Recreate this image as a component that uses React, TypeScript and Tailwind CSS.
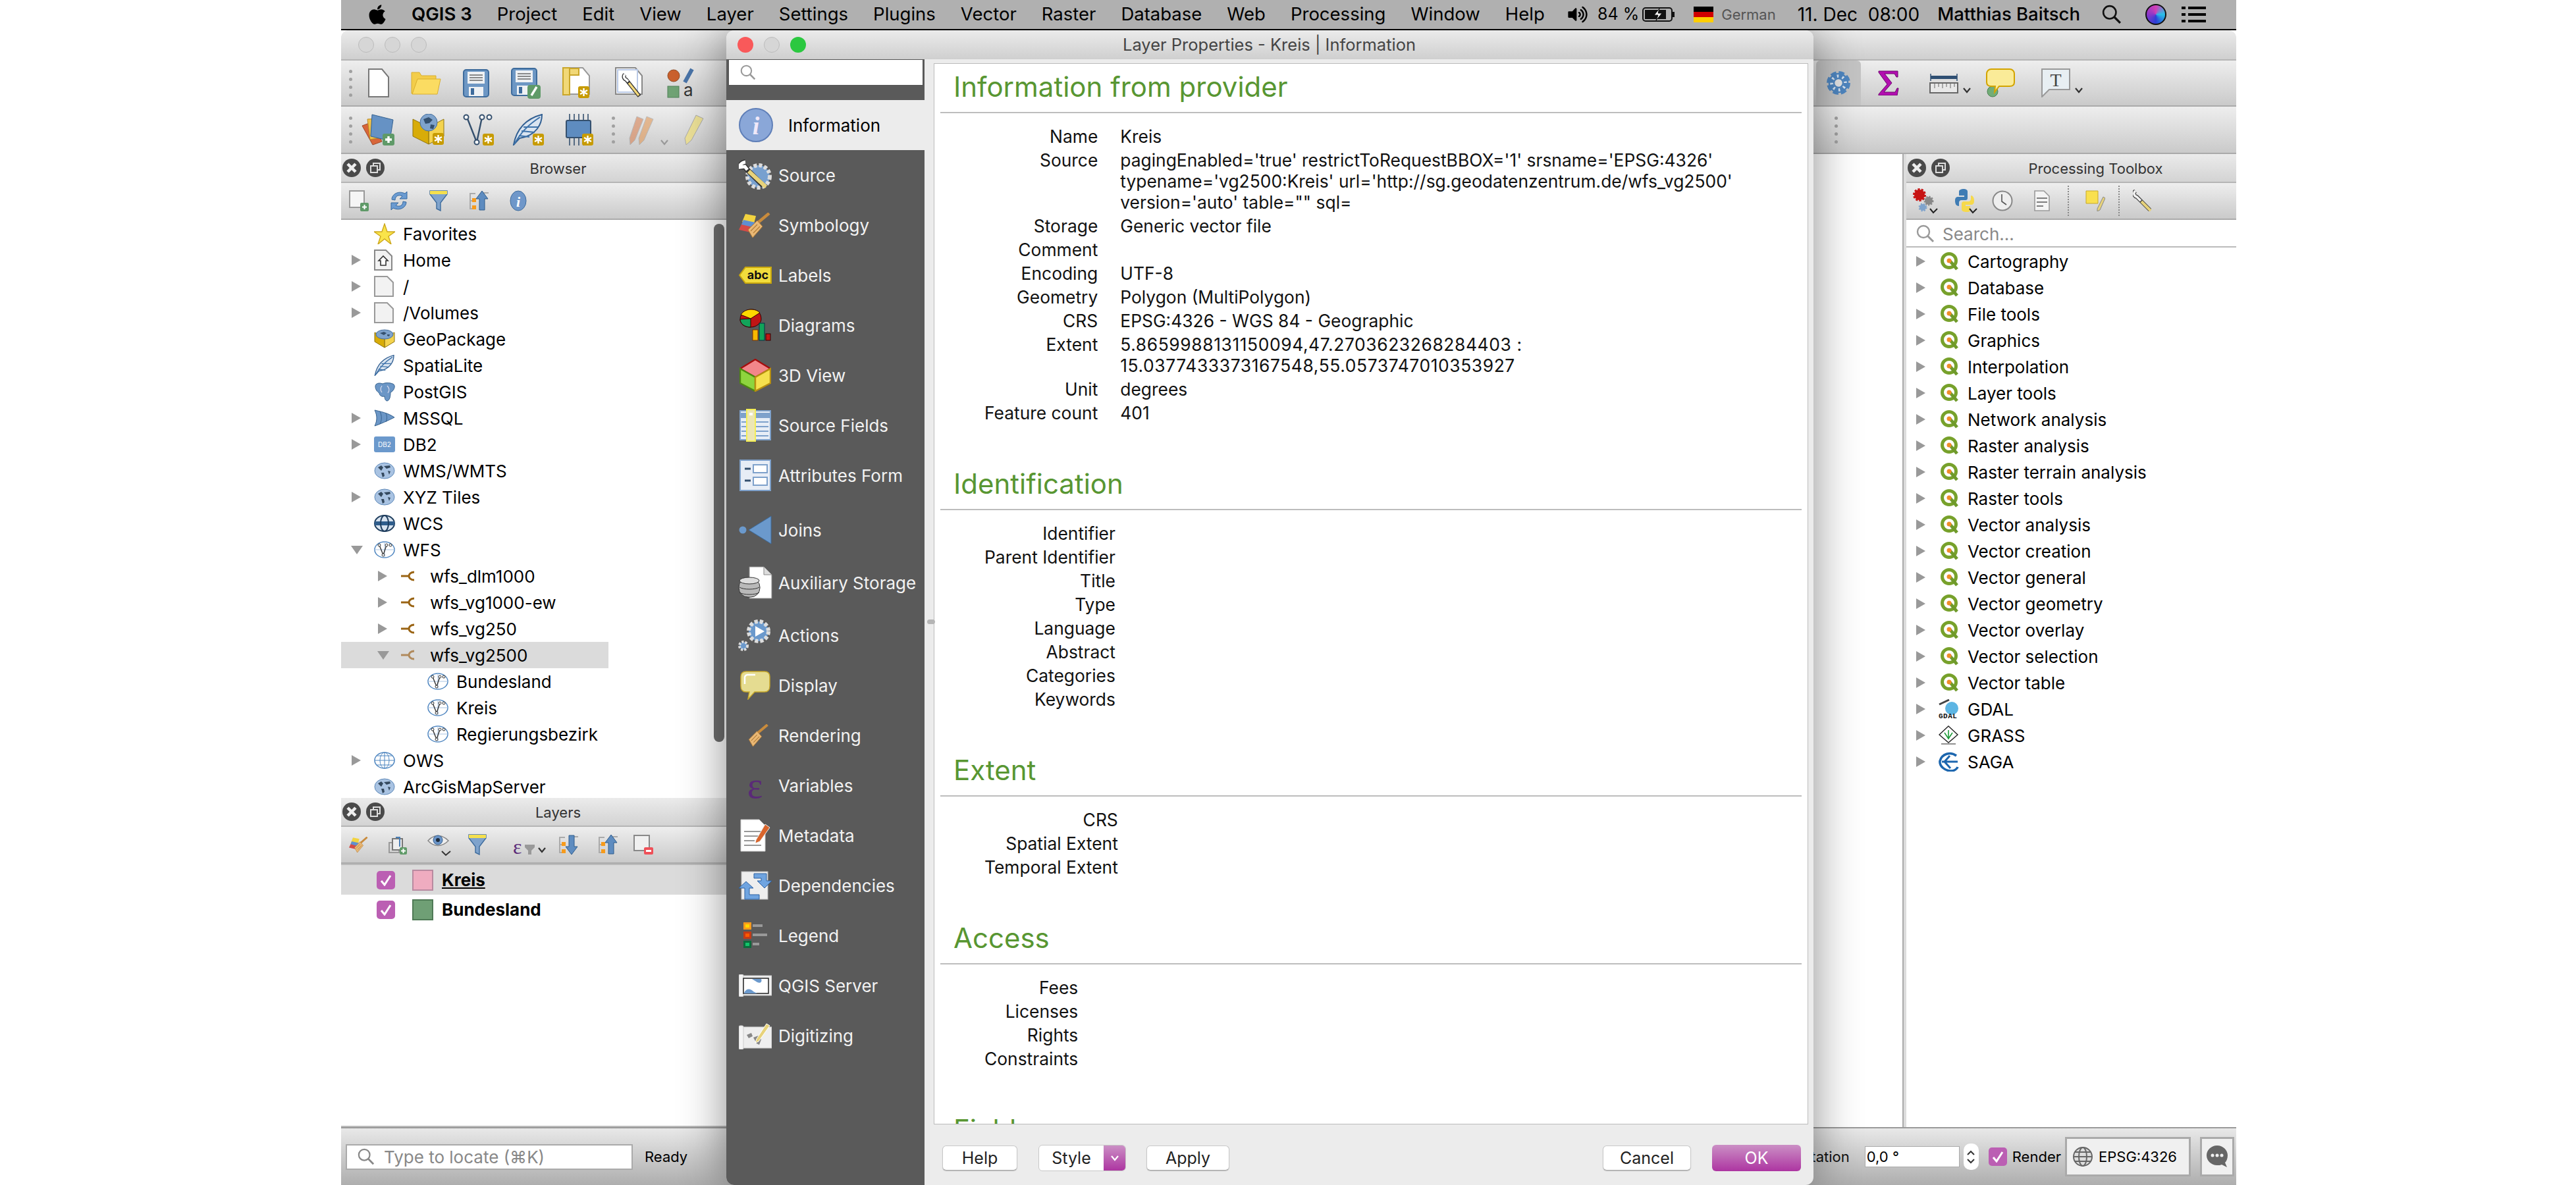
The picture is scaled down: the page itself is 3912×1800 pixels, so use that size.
import type { ReactNode } from 'react';
import { FaApple, FaVolumeUp } from 'react-icons/fa';

const Ic = ({ w, h, children, className }: { w: number; h: number; children: ReactNode; className?: string }) => (
  <svg width={w} height={h} viewBox={`0 0 ${w} ${h}`} className={`shrink-0 ${className ?? ''}`}>
    {children}
  </svg>
);

const Chevron = ({ color = '#333' }: { color?: string }) => (
  <Ic w={14} h={10}>
    <path d="M2 2l5 6 5-6" fill="none" stroke={color} strokeWidth="2.2" />
  </Ic>
);

const Badge = ({ x, y, color = '#c79b00' }: { x: number; y: number; color?: string }) => (
  <g>
    <rect x={x} y={y} width="17" height="18" rx="3" fill={color} />
    <path d={`M${x + 8.5} ${y + 3}v12M${x + 3} ${y + 6}l11 6M${x + 14} ${y + 6}l-11 6`} stroke="#fff" strokeWidth="2.4" />
  </g>
);

const Page = ({ x = 0, y = 0, w = 32, h = 44, stroke = '#777', fill = '#fff' }: { x?: number; y?: number; w?: number; h?: number; stroke?: string; fill?: string }) => (
  <path d={`M${x + 1} ${y + 1}h${w - 12}l10 12v${h - 14}h-${w - 2}z`} fill={fill} stroke={stroke} strokeWidth="2" />
);

const Floppy = () => (
  <g>
    <rect x="1" y="1" width="38" height="41" rx="4" fill="#6d97c4" stroke="#3d6b9c" strokeWidth="2" />
    <rect x="7" y="4" width="26" height="18" fill="#eef1f4" />
    <path d="M10 9h20M10 13h20M10 17h20" stroke="#666" strokeWidth="1.6" />
    <rect x="9" y="27" width="22" height="14" fill="#eef1f4" />
    <rect x="12" y="29" width="5" height="10" fill="#3d6b9c" />
  </g>
);

const IconNew = () => <Ic w={32} h={44}><Page /></Ic>;
const IconOpen = () => (
  <Ic w={46} h={36}>
    <path d="M1 34V2h12l3 5h22v6H12L7 34z" fill="#f3cd4a" stroke="#d9ae2c" />
    <path d="M10 12h35l-5 23H2z" fill="#fbdc62" stroke="#d9ae2c" />
  </Ic>
);
const IconSave = () => <Ic w={40} h={43}><Floppy /></Ic>;
const IconSaveAs = () => (
  <Ic w={45} h={47}>
    <Floppy />
    <rect x="25" y="26" width="20" height="21" rx="4" fill="#5f9a68" />
    <path d="M31 42l8-13" stroke="#fff" strokeWidth="3.4" />
  </Ic>
);
const IconLayout = () => (
  <Ic w={47} h={48}>
    <Page x={6} y={0} w={36} h={42} stroke="#999" />
    <rect x="1" y="1" width="10" height="41" fill="#f1d877" stroke="#c9a62a" strokeWidth="2" />
    <path d="M11 2h14v10H11z" fill="#f1d877" stroke="#c9a62a" strokeWidth="2" />
    <Badge x={24} y={29} />
  </Ic>
);
const IconWrenchPage = () => (
  <Ic w={46} h={48}>
    <Page w={42} h={42} stroke="#888" />
    <rect x="4" y="4" width="30" height="34" fill="none" stroke="#b9c9e6" strokeWidth="2" />
    <path d="M15 11c-3 3-1 7 2 8l20 25" fill="none" stroke="#333" strokeWidth="6" />
    <path d="M15 11c-3 3-1 7 2 8l3 3" fill="none" stroke="#fff" strokeWidth="3.4" />
    <path d="M21 24l15 19" fill="none" stroke="#f4d97a" strokeWidth="3.4" />
  </Ic>
);
const IconStyleMgr = () => (
  <Ic w={42} h={46}>
    <circle cx="10" cy="12" r="9" fill="#c9602d" stroke="#8f4a24" />
    <rect x="1" y="28" width="17" height="17" fill="#6fa274" stroke="#4f8056" />
    <path d="M27 22l11-20" stroke="#4a74a8" strokeWidth="6" />
    <text x="25" y="43" fontSize="26" fill="#333" fontFamily="Inter">a</text>
  </Ic>
);
const IconAddLayer = () => (
  <Ic w={50} h={48}>
    <path d="M1 18l16-6 14 30-14 5z" fill="#d8663a" stroke="#9c4a2b" />
    <path d="M9 8l22-1 3 28-21 4z" fill="#f0c04a" stroke="#b98a20" />
    <path d="M16 1l32 8-5 32-29-7z" fill="#6692c4" stroke="#34618f" />
    <rect x="32" y="30" width="18" height="18" rx="3" fill="#5f9a68" />
    <path d="M36 39h10M41 34v10" stroke="#fff" strokeWidth="3.4" />
  </Ic>
);
const IconGeoPkg = () => (
  <Ic w={50} h={48}>
    <path d="M25 20L48 8v26L25 46z" fill="#f4d34e" stroke="#8f7410" />
    <path d="M25 20L1 8v26l24 12z" fill="#d8ac08" stroke="#8f7410" />
    <circle cx="25" cy="13" r="13" fill="#7fa3cc" stroke="#446f9e" />
    <path d="M17 8l8-3 6 4-5 5-6 1zM28 16l6 1-2 6-5-1z" fill="#34506e" />
    <Badge x={31} y={29} color="#c79b00" />
  </Ic>
);
const IconVirtual = () => (
  <Ic w={48} h={48}>
    <path d="M6 5l15 38L29 5" fill="none" stroke="#35506e" strokeWidth="2.4" />
    <circle cx="5" cy="5" r="3.5" fill="#fff" stroke="#35506e" strokeWidth="2" />
    <circle cx="29" cy="5" r="3.5" fill="#fff" stroke="#35506e" strokeWidth="2" />
    <circle cx="21" cy="43" r="3.5" fill="#fff" stroke="#35506e" strokeWidth="2" />
    <circle cx="40" cy="5" r="3.5" fill="#fff" stroke="#35506e" strokeWidth="2" />
    <Badge x={30} y={30} />
  </Ic>
);
const Feather = ({ w = 48, h = 48 }: { w?: number; h?: number }) => (
  <Ic w={w} h={h}>
    <g transform={`scale(${w / 48} ${h / 48})`}>
      <path d="M2 47C6 25 18 8 45 1c0 14-8 32-34 36z" fill="#d9e4f0" stroke="#315f92" strokeWidth="2" />
      <path d="M3 46C12 30 22 18 42 5M14 26l20 2M17 20l22 0M10 33l16 2" fill="none" stroke="#3d72aa" strokeWidth="2" />
    </g>
  </Ic>
);
const IconSpatialite = () => (
  <div className="relative h-[48px] w-[48px]">
    <Feather />
    <svg width="17" height="18" viewBox="0 0 17 18" className="absolute right-0 bottom-0">
      <Badge x={0} y={0} />
    </svg>
  </div>
);
const IconMemory = () => (
  <Ic w={42} h={48}>
    <path d="M6 0v48M13 0v48M20 0v48M27 0v48M34 0v40" stroke="#35506e" strokeWidth="1.6" />
    <rect x="1" y="10" width="37" height="26" rx="2" fill="#5e8cc0" stroke="#35506e" strokeWidth="2" />
    <Badge x={25} y={30} />
  </Ic>
);
const IconPencils = () => (
  <div className="flex items-end gap-[8px]">
    <Ic w={40} h={48}>
      <g opacity="0.55">
        <path d="M13 4l10 4-13 32-7 7-1-10z" fill="#d77a4a" stroke="#999" />
        <path d="M28 4l10 4-14 32-7 7-1-10z" fill="#e2934c" stroke="#999" />
      </g>
    </Ic>
    <Chevron color="#999" />
  </div>
);
const IconPencil = () => (
  <Ic w={32} h={48}>
    <path d="M19 2l11 5L12 40l-8 7-2-10z" fill="#ece097" stroke="#aaa" />
  </Ic>
);

const DockClose = () => (
  <Ic w={28} h={28}>
    <circle cx="14" cy="14" r="14" fill="#4a4a4a" />
    <path d="M8 8l12 12M20 8L8 20" stroke="#eee" strokeWidth="4.5" />
  </Ic>
);
const DockFloat = () => (
  <Ic w={28} h={28}>
    <circle cx="14" cy="14" r="14" fill="#4a4a4a" />
    <rect x="11" y="7" width="10" height="10" fill="none" stroke="#ddd" strokeWidth="2" />
    <rect x="7" y="11" width="10" height="10" fill="#4a4a4a" stroke="#ddd" strokeWidth="2" />
  </Ic>
);
const Funnel = () => (
  <Ic w={28} h={32}>
    <path d="M1 1h26v5L17 19v12l-6-3v-9L1 6z" fill="#7fa3cc" stroke="#3d6b9c" strokeWidth="1.4" />
    <rect x="1" y="1" width="26" height="5" fill="#f5e04e" />
  </Ic>
);
const IconInfoSmall = () => (
  <Ic w={26} h={32}>
    <ellipse cx="13" cy="16" rx="12" ry="15" fill="#6f97c9" stroke="#3d6b9c" />
    <text x="13" y="25" textAnchor="middle" fontSize="22" fontStyle="italic" fontWeight="700" fill="#fff" fontFamily="Liberation Serif">i</text>
  </Ic>
);
const IconNewDoc = () => (
  <Ic w={30} h={32}>
    <rect x="1" y="1" width="22" height="25" fill="#f5f5f5" stroke="#999" strokeWidth="2" />
    <rect x="17" y="19" width="13" height="13" rx="2" fill="#5f9a68" />
    <path d="M20 25.5h7M23.500 22v7" stroke="#fff" strokeWidth="2" />
  </Ic>
);
const IconRefresh = () => (
  <Ic w={28} h={32}>
    <path d="M3 14C3 6 13 0 23 5l3-3v11H15l4-4C13 6 8 9 8 15z" fill="#6b9bd1" stroke="#37699e" />
    <path d="M25 18c0 8-10 14-20 9l-3 3V19h11l-4 4c6 3 11 0 11-6z" fill="#6b9bd1" stroke="#37699e" />
  </Ic>
);
const IconTreeArrow = ({ up = true }: { up?: boolean }) => (
  <Ic w={30} h={32}>
    <path d="M2 4v25M2 5h8M2 16h8M2 28h8M18 4h12" stroke="#aaa" strokeWidth="2" />
    <rect x="5" y="12" width="6" height="6" fill="#f79b1c" />
    <rect x="5" y="23" width="6" height="6" fill="#f79b1c" />
    {up ? (
      <path d="M20 1l9 12h-5v17h-8V13h-5z" fill="#5e8cc0" stroke="#2e5c8c" />
    ) : (
      <path d="M16 2h8v17h5l-9 12-9-12h5z" fill="#5e8cc0" stroke="#2e5c8c" />
    )}
  </Ic>
);
const IconBroom = ({ w = 50, h = 38, flag = true }: { w?: number; h?: number; flag?: boolean }) => (
  <Ic w={w} h={h}>
    <g transform={`scale(${w / 50} ${h / 38})`}>
      {flag && (
        <>
          <path d="M0 26l7-14 17 4-6 14z" fill="#d44b46" />
          <path d="M5 14l5-12 16 3-3 12z" fill="#f2d33f" />
          <path d="M4 18l3-7 18 4-4 7z" fill="#5f8fd0" />
        </>
      )}
      <path d="M46 1L28 16" stroke="#c98b3c" strokeWidth="4.5" />
      <path d="M14 26l14-14 8 9-15 17z" fill="#e9b876" stroke="#b37d36" />
      <path d="M18 28l10-10M22 31l10-10" stroke="#b37d36" strokeWidth="1.2" />
    </g>
  </Ic>
);
const IconClipPlus = () => (
  <Ic w={28} h={30}>
    <rect x="1" y="12" width="15" height="15" fill="none" stroke="#999" strokeWidth="2" />
    <rect x="6" y="6" width="15" height="17" fill="#eee" stroke="#777" strokeWidth="2" />
    <path d="M11 4h6v14" fill="none" stroke="#4a7eb5" strokeWidth="2" />
    <rect x="17" y="19" width="11" height="11" rx="2" fill="#5f9a68" />
    <path d="M19 24.500h7M22.500 21v7" stroke="#fff" strokeWidth="2" />
  </Ic>
);
const IconEye = () => (
  <Ic w={38} h={36}>
    <path d="M1 12C10 2 22 2 32 12 22 22 10 22 1 12z" fill="#eee" stroke="#888" strokeWidth="1.5" />
    <circle cx="16" cy="11" r="7" fill="#6b95c8" stroke="#355f8e" />
    <circle cx="16" cy="11" r="3" fill="#1f2d3d" />
    <path d="M22 28l6 6 7-6" fill="none" stroke="#333" strokeWidth="2" />
  </Ic>
);
const Epsilon = ({ size = 22, color = '#5a2a78' }: { size?: number; color?: string }) => (
  <span style={{ fontSize: size, color }} className="font-['Liberation_Serif',serif] leading-none">ε</span>
);
const IconExprFilter = () => (
  <div className="flex items-start">
    <div className="relative h-[30px] w-[34px]">
      <Epsilon size={32} />
      <svg width="16" height="16" viewBox="0 0 16 16" className="absolute right-0 bottom-0">
        <path d="M0 1h15v4l-5 5v6H5v-6L0 5z" fill="#999" />
      </svg>
    </div>
    <div className="mt-[18px] ml-[3px]"><Chevron /></div>
  </div>
);
const IconRemove = () => (
  <Ic w={30} h={30}>
    <rect x="1" y="1" width="23" height="23" fill="#f0f0f0" stroke="#888" strokeWidth="2" />
    <rect x="16" y="19" width="14" height="11" rx="2" fill="#ef5058" />
    <rect x="19" y="23" width="8" height="3" fill="#fff" />
  </Ic>
);

const Folder = () => (
  <Ic w={30} h={32}>
    <path d="M1 1h13l6 0 9 9v21H1z" fill="#f2f2f2" stroke="#999" strokeWidth="2" />
  </Ic>
);
const HomeIc = () => (
  <Ic w={30} h={32}>
    <path d="M1 1h17l9 9v21H1z" fill="#f2f2f2" stroke="#888" strokeWidth="2" />
    <path d="M7 17l7-7 7 7h-3v7h-8v-7z" fill="#fff" stroke="#333" strokeWidth="1.6" />
  </Ic>
);
const Star = () => (
  <Ic w={32} h={32}>
    <path d="M16 1l4 12h12l-10 7 4 12-10-8-10 8 4-12L0 13h12z" fill="#f9e44a" stroke="#cda71c" strokeWidth="1.4" />
  </Ic>
);
const GlobeMap = ({ w = 32, h = 26 }: { w?: number; h?: number }) => (
  <Ic w={w} h={h}>
    <ellipse cx={w / 2} cy={h / 2} rx={w / 2 - 1} ry={h / 2 - 1} fill="#a9c3e2" stroke="#5d88b8" />
    <path d={`M6 8l5-3 3 3-3 5zM15 6l9-1 1 3-6 2zM11 16l4 0 1 5-3 2zM21 13l4 1-2 5z`} fill="#34495e" />
  </Ic>
);
const GlobeWcs = () => (
  <Ic w={32} h={26}>
    <ellipse cx="16" cy="13" rx="15" ry="12" fill="#d8e3ef" stroke="#1f3e5e" strokeWidth="2" />
    <rect x="1" y="10" width="30" height="6" fill="#2f5d8c" />
    <ellipse cx="16" cy="13" rx="6" ry="12" fill="none" stroke="#1f3e5e" strokeWidth="2" />
  </Ic>
);
const GlobeWfs = () => (
  <Ic w={32} h={26}>
    <ellipse cx="16" cy="13" rx="15" ry="12" fill="#fff" stroke="#4f86c0" strokeWidth="1.5" />
    <path d="M1 13h30M16 1v24" stroke="#a9c3e2" />
    <path d="M8 6l6 15 5-15" fill="none" stroke="#333" strokeWidth="1.4" />
    <circle cx="8" cy="6" r="2" fill="#fff" stroke="#333" />
    <circle cx="19" cy="6" r="2" fill="#fff" stroke="#333" />
    <circle cx="25" cy="6" r="2" fill="#fff" stroke="#333" />
    <circle cx="14" cy="21" r="2" fill="#fff" stroke="#333" />
  </Ic>
);
const GlobeOws = () => (
  <Ic w={32} h={26}>
    <ellipse cx="16" cy="13" rx="15" ry="12" fill="#fff" stroke="#4f86c0" strokeWidth="1.5" />
    <ellipse cx="16" cy="13" rx="7" ry="12" fill="none" stroke="#4f86c0" />
    <path d="M1 13h30M4 6h24M4 20h24M16 1v24" stroke="#4f86c0" />
  </Ic>
);
const Elephant = () => (
  <Ic w={32} h={30}>
    <path d="M2 7C2 2 8 1 13 3c4-2 13-2 17 1 3 3 0 10-5 12 0 6-1 12-5 13-3 0-4-4-4-7-4 1-8-1-8-5C5 15 2 12 2 7z" fill="#6b96c6" stroke="#36628f" />
    <path d="M12 6c-3 4-2 8 0 10M20 6c3 3 4 7 1 11" fill="none" stroke="#dde" strokeWidth="1.2" />
  </Ic>
);
const Sail = () => (
  <Ic w={32} h={26}>
    <path d="M1 1c8 2 20 4 30 11C21 17 10 22 1 25c4-8 4-16 0-24z" fill="#6b96c6" stroke="#36628f" />
    <path d="M9 3c3 6 3 14 0 19M18 6c2 4 2 9 0 13" fill="none" stroke="#36628f" />
  </Ic>
);
const Db2Ic = () => (
  <Ic w={32} h={24}>
    <rect width="32" height="24" rx="3" fill="#6b99cc" />
    <text x="16" y="16" textAnchor="middle" fontSize="10" fill="#fff" fontFamily="Inter">DB2</text>
  </Ic>
);
const WfsGroup = ({ sel = false }: { sel?: boolean }) => (
  <Ic w={21} h={16}>
    <path d="M0 8h12" stroke={sel ? '#b08a5c' : '#9a6414'} strokeWidth="3" />
    <path d="M20 2c-5 0-8 3-8 6s3 6 8 6" fill="none" stroke={sel ? '#b08a5c' : '#9a6414'} strokeWidth="3" />
  </Ic>
);

const Arrow = ({ dir }: { dir?: 'r' | 'd' }) =>
  dir === 'r' ? (
    <Ic w={16} h={18}><path d="M1 1l14 8L1 17z" fill="#999" /></Ic>
  ) : dir === 'd' ? (
    <Ic w={18} h={14}><path d="M0 1h18L9 14z" fill="#999" /></Ic>
  ) : (
    <span />
  );

const QIc = () => (
  <Ic w={29} h={28}>
    <circle cx="14" cy="13" r="10.500" fill="#fff" stroke="#77a12b" strokeWidth="5" />
    <path d="M15 13l11 13" stroke="#6f9a2b" strokeWidth="5" />
    <circle cx="14" cy="13" r="3.500" fill="#ef8d2a" />
  </Ic>
);
const GdalIc = () => (
  <Ic w={31} h={30}>
    <circle cx="20" cy="14" r="10" fill="#5db5e3" />
    <path d="M1 8l15-7" stroke="#444" strokeWidth="3" />
    <text x="0" y="29" fontSize="11" fontWeight="700" fill="#111" fontFamily="Liberation Mono" letterSpacing="0.500">GDAL</text>
  </Ic>
);
const GrassIc = () => (
  <Ic w={31} h={30}>
    <path d="M15 1l14 13-14 12L1 14z" fill="#fff" stroke="#222" strokeWidth="1.4" />
    <path d="M15 21V7M9 11l6 9 6-9" fill="none" stroke="#1e9c3a" strokeWidth="1.6" />
    <path d="M4 28h22" stroke="#222" />
  </Ic>
);
const SagaIc = () => (
  <Ic w={31} h={30}>
    <path d="M27 6C18-1 5 3 2 14c-1 8 8 15 17 15 5 0 9-3 10-6" fill="none" stroke="#1c66ae" strokeWidth="3.5" />
    <path d="M5 15h24M17 6L9 15l9 10" fill="none" stroke="#1c66ae" strokeWidth="3" />
  </Ic>
);

const IconInformation = () => (
  <Ic w={52} h={52}>
    <circle cx="26" cy="26" r="25" fill="#8aa7d8" stroke="#5f7fb8" strokeWidth="2" />
    <text x="26" y="40" textAnchor="middle" fontSize="38" fontStyle="italic" fontWeight="700" fill="#f0e8f8" fontFamily="Liberation Serif">i</text>
  </Ic>
);
const IconSource = () => (
  <Ic w={50} h={48}>
    <circle cx="30" cy="26" r="17" fill="#78a0cf" stroke="#ddd" strokeWidth="6" strokeDasharray="5 3" />
    <path d="M10 4c-6 1-9 5-8 8l7-1 4 5 24 24" fill="none" stroke="#333" strokeWidth="8" />
    <path d="M10 4c-6 1-9 5-8 8l7-1 4 5" fill="none" stroke="#fff" strokeWidth="5" />
    <path d="M15 18l26 24" stroke="#e7d27a" strokeWidth="6" />
  </Ic>
);
const IconLabels = () => (
  <Ic w={50} h={26}>
    <path d="M10 1h39v24H10L1 13z" fill="#f1dc3c" stroke="#c9a70d" strokeWidth="2" />
    <text x="29" y="19" textAnchor="middle" fontSize="18" fontWeight="700" fill="#111" fontFamily="Inter">abc</text>
  </Ic>
);
const IconDiagrams = () => (
  <Ic w={48} h={50}>
    <path d="M1 16C1 6 10 1 18 1c10 0 15 6 15 15 0 6-8 12-16 12C7 28 1 23 1 16z" fill="#c01515" stroke="#300" />
    <path d="M17 15L1 16c0 6 6 12 16 12z" fill="#12a45a" stroke="#300" />
    <path d="M17 15L2 9C6 3 12 1 18 1c6 0 10 2 13 5z" fill="#ffd800" stroke="#300" />
    <rect x="20" y="32" width="8" height="16" fill="#f6b900" stroke="#7a3300" />
    <rect x="30" y="22" width="8" height="26" fill="#12a45a" stroke="#034" />
    <rect x="40" y="38" width="7" height="10" fill="#c01515" stroke="#300" />
  </Ic>
);
const Icon3D = () => (
  <Ic w={48} h={50}>
    <path d="M24 1l23 14-23 13L1 15z" fill="#f2868a" stroke="#a50d0d" strokeWidth="2.400" />
    <path d="M1 15l23 13v21L1 37z" fill="#8ed53e" stroke="#4c8a10" strokeWidth="2.400" />
    <path d="M47 15L24 28v21l23-12z" fill="#f5e04e" stroke="#b78f10" strokeWidth="2.400" />
  </Ic>
);
const IconSourceFields = () => (
  <Ic w={48} h={50}>
    <rect x="1" y="3" width="46" height="44" fill="#e7edf6" stroke="#7ea1cb" strokeWidth="2" />
    <rect x="1" y="6" width="46" height="8" fill="#7ea1cb" />
    <path d="M18 20h26M18 27h26M18 34h26M18 41h26M3 20h8M3 27h8M3 34h8M3 41h8" stroke="#7ea1cb" strokeWidth="2" />
    <rect x="11" y="1" width="13" height="48" fill="#ece6b4" stroke="#f4ee55" strokeWidth="2" />
    <rect x="15" y="6" width="5" height="4" fill="#fff" />
  </Ic>
);
const IconAttrForm = () => (
  <Ic w={48} h={48}>
    <rect x="1" y="1" width="46" height="46" fill="#e7edf6" stroke="#7ea1cb" strokeWidth="2" />
    <path d="M8 14h9M8 32h9" stroke="#35506e" strokeWidth="3" />
    <rect x="21" y="8" width="21" height="12" fill="#fff" stroke="#7ea1cb" strokeWidth="2" />
    <rect x="21" y="27" width="21" height="12" fill="#fff" stroke="#7ea1cb" strokeWidth="2" />
  </Ic>
);
const IconJoins = () => (
  <Ic w={50} h={44}>
    <ellipse cx="6" cy="22" rx="5.500" ry="5.500" fill="#6b99cc" />
    <path d="M15 22L49 1v42z" fill="#6b99cc" stroke="#3d6b9c" />
  </Ic>
);
const IconAux = () => (
  <Ic w={52} h={50}>
    <path d="M17 1h22l12 12v36H17z" fill="#fff" stroke="#888" />
    <path d="M39 1v12h12" fill="#ddd" stroke="#888" />
    <rect x="1" y="18" width="32" height="29" rx="14" fill="#b9b9b9" stroke="#333" />
    <ellipse cx="17" cy="22" rx="15" ry="5" fill="#ddd" stroke="#333" />
    <path d="M2 32c6 4 24 4 30 0M2 40c6 4 24 4 30 0" fill="none" stroke="#333" />
  </Ic>
);
const IconActions = () => (
  <Ic w={54} h={54}>
    <circle cx="32" cy="21" r="15" fill="#6b99cc" stroke="#ddd" strokeWidth="6" strokeDasharray="5 3" />
    <path d="M27 13l14 8-14 8z" fill="#fff" />
    <circle cx="9" cy="43" r="6" fill="#6b99cc" stroke="#ddd" strokeWidth="4" strokeDasharray="3 2" />
  </Ic>
);
const IconDisplay = () => (
  <Ic w={46} h={44}>
    <path d="M9 1h28c5 0 8 3 8 8v14c0 6-3 9-8 9H22L12 43l2-11H9c-5 0-8-3-8-9V9c0-5 3-8 8-8z" fill="#e5dc91" stroke="#c7a82a" strokeWidth="1.500" />
    <path d="M7 20V10c0-2 2-4 4-4h12" fill="none" stroke="#fff" strokeWidth="2.500" />
  </Ic>
);
const IconMetadata = () => (
  <Ic w={46} h={50}>
    <path d="M1 1h28l9 9v39H1z" fill="#fff" stroke="#ccc" />
    <path d="M6 19h26M6 26h22M6 33h16M6 40h26" stroke="#777" strokeWidth="1.500" />
    <path d="M24 32L38 8l7 5-15 21-7 3z" fill="#d9652c" stroke="#eee" />
  </Ic>
);
const IconDeps = () => (
  <Ic w={52} h={44}>
    <rect x="5" y="1" width="40" height="42" fill="#eee" stroke="#bbb" />
    <path d="M1 26L12 16l11 10h-6v10h15v7H10V26z" fill="#6fa4e0" stroke="#2d60a0" />
    <path d="M24 4h19v11h8l-11 11-11-11h6V11H24z" fill="#6fa4e0" stroke="#2d60a0" />
  </Ic>
);
const IconLegend = () => (
  <Ic w={36} h={42}>
    <rect x="0" y="1" width="12" height="11" fill="#f79b1c" />
    <rect x="3" y="4" width="6" height="5" fill="#ffd800" />
    <rect x="0" y="15" width="12" height="11" fill="#c53a16" />
    <rect x="3" y="18" width="6" height="5" fill="#ff5a00" />
    <rect x="0" y="29" width="12" height="11" fill="#0c6b3c" />
    <rect x="3" y="32" width="6" height="5" fill="#12c46a" />
    <path d="M14 6h15M14 20h22M14 34h10" stroke="#999" strokeWidth="4" />
  </Ic>
);
const IconServer = () => (
  <Ic w={50} h={34}>
    <rect x="0" y="2" width="50" height="30" fill="#eee" stroke="#ccc" />
    <rect x="0" y="0" width="7" height="34" rx="2" fill="#f4f4f4" stroke="#ccc" />
    <rect x="7" y="6" width="38" height="23" fill="#fff" stroke="#222" strokeWidth="1.500" />
    <path d="M8 28c4-8 10-6 14-2l6 3H8zM20 7l14 0c2 5-2 7-6 5z" fill="#6b99cc" />
  </Ic>
);
const IconDigitize = () => (
  <Ic w={50} h={42}>
    <rect x="0" y="8" width="50" height="32" fill="#eee" stroke="#ccc" />
    <rect x="0" y="6" width="7" height="36" rx="2" fill="#f4f4f4" stroke="#ccc" />
    <path d="M12 20l7-3 2 5-6 3zM22 24l8-3 4 6-3 8-4-2z" fill="#888" />
    <path d="M27 26L42 3l5 3-17 24-5 2z" fill="#e7d27a" stroke="#fff" />
  </Ic>
);
const Lens = ({ size = 28, color = '#999' }: { size?: number; color?: string }) => (
  <svg width={size} height={size} viewBox="0 0 28 28" className="shrink-0">
    <circle cx="11" cy="11" r="9" fill="none" stroke={color} strokeWidth="2.400" />
    <path d="M17.500 17.500L26 26" stroke={color} strokeWidth="3" />
  </svg>
);

const IconGear = () => (
  <Ic w={44} h={44}>
    <circle cx="22" cy="22" r="14" fill="#d9e5f2" stroke="#4f86c0" strokeWidth="2.500" />
    <circle cx="22" cy="22" r="13" fill="none" stroke="#4f86c0" strokeWidth="10" strokeDasharray="7 3.200" />
    <circle cx="22" cy="22" r="7" fill="#e4e4e4" stroke="#4f86c0" strokeWidth="2.500" />
  </Ic>
);
const IconSigma = () => (
  <Ic w={32} h={38}>
    <path d="M1 1h29v9l-2 0-3-5H10l11 14L9 33h17l3-6 2 0-2 11H1v-2l13-15L1 3z" fill="#b20fb0" stroke="#6a0a6a" />
  </Ic>
);
const IconMeasure = () => (
  <div className="flex items-end gap-[6px]">
    <Ic w={44} h={32}>
      <path d="M2 2v11M42 2v11" stroke="#2f4f73" strokeWidth="1.500" />
      <rect x="2" y="5" width="40" height="5" fill="#2f4f73" />
      <rect x="1" y="16" width="42" height="15" fill="#e8e8e8" stroke="#666" strokeWidth="2" />
      <path d="M8 17v7M14 17v5M20 17v7M26 17v5M32 17v7M38 17v5" stroke="#666" />
    </Ic>
    <Chevron />
  </div>
);
const IconBalloon = () => (
  <Ic w={44} h={44}>
    <circle cx="10" cy="35" r="8" fill="#72ad77" stroke="#4d8052" />
    <path d="M8 1h28c4 0 7 3 7 7v13c0 4-3 6-7 6H20l-7 9 1-9H8c-4 0-7-2-7-6V8c0-4 3-7 7-7z" fill="#faeb98" stroke="#d3a400" strokeWidth="2" />
  </Ic>
);
const IconTextAnn = () => (
  <div className="flex items-end gap-[6px]">
    <Ic w={44} h={44}>
      <path d="M1 1h42v31H12L1 43z" fill="#e8eff3" stroke="#999" strokeWidth="2" />
      <text x="22" y="27" textAnchor="middle" fontSize="28" fill="#444" fontFamily="Liberation Serif">T</text>
    </Ic>
    <div className="mb-[6px]"><Chevron /></div>
  </div>
);
const IconModels = () => (
  <Ic w={40} h={40}>
    <circle cx="10" cy="11" r="8" fill="#c71313" stroke="#c71313" strokeWidth="4" strokeDasharray="3 2" />
    <circle cx="24" cy="20" r="6" fill="#888" stroke="#888" strokeWidth="3" strokeDasharray="2 2" />
    <circle cx="15" cy="30" r="5" fill="#7fa3cc" stroke="#7fa3cc" strokeWidth="3" strokeDasharray="2 2" />
    <path d="M26 32l5 6 6-6" fill="none" stroke="#222" strokeWidth="2" />
  </Ic>
);
const IconPython = () => (
  <Ic w={38} h={40}>
    <path d="M2 20c0-6 3-6 6-6h8v-2H8V6c0-3 4-4 7-4s6 1 6 4v10c0 2-1 3-3 3H12c-3 0-4 2-4 4v5C4 28 2 25 2 20z" fill="#3f7cb4" />
    <path d="M26 12c0 0 0 0 0 0 3 0 5 3 5 8 0 6-3 6-6 6h-7v2h7v6c0 3-3 3-6 3s-7-1-7-4V24c0-2 2-3 3-3h7c3 0 4-2 4-4z" fill="#f6d94c" />
    <path d="M24 32l5 6 6-6" fill="none" stroke="#222" strokeWidth="2" />
  </Ic>
);
const IconClock = () => (
  <Ic w={32} h={32}>
    <circle cx="16" cy="16" r="14.500" fill="#eee" stroke="#888" strokeWidth="2" />
    <path d="M15 6v11l7 5" fill="none" stroke="#555" strokeWidth="1.600" />
  </Ic>
);
const IconLog = () => (
  <Ic w={24} h={32}>
    <path d="M1 1h14l8 8v22H1z" fill="#f4f4f4" stroke="#999" strokeWidth="1.600" />
    <path d="M4 12h16M4 18h16M4 24h10" stroke="#555" strokeWidth="1.600" />
  </Ic>
);
const IconEdit = () => (
  <Ic w={30} h={32}>
    <path d="M1 1h18v19l-6 0H1z" fill="#f9e04f" stroke="#c7a82a" />
    <path d="M18 28l9-18 3 2-8 18-4 2z" fill="#e7d27a" stroke="#888" />
  </Ic>
);
const IconWrench = () => (
  <Ic w={32} h={34}>
    <path d="M4 2C0 5 2 10 6 11l20 20" fill="none" stroke="#444" strokeWidth="6" />
    <path d="M4 2C0 5 2 10 6 11l6 6" fill="none" stroke="#f2f2f2" strokeWidth="3.500" />
    <path d="M13 18l14 14" stroke="#e7d27a" strokeWidth="4" />
  </Ic>
);

const Check = () => (
  <span className="flex h-[28px] w-[28px] shrink-0 items-center justify-center rounded-[5px] bg-[#bb5fb3]">
    <Ic w={18} h={18}><path d="M2 10l5 6L16 2" fill="none" stroke="#fff" strokeWidth="3" /></Ic>
  </span>
);

const Handle = ({ className = '' }: { className?: string }) => (
  <div className={`flex flex-col gap-[7px] ${className}`}>
    <span className="h-[5px] w-[5px] rounded-full bg-[#a0a0a0]" />
    <span className="h-[5px] w-[5px] rounded-full bg-[#a0a0a0]" />
    <span className="h-[5px] w-[5px] rounded-full bg-[#a0a0a0]" />
    <span className="h-[5px] w-[5px] rounded-full bg-[#a0a0a0]" />
  </div>
);

const menuItems = ['Project', 'Edit', 'View', 'Layer', 'Settings', 'Plugins', 'Vector', 'Raster', 'Database', 'Web', 'Processing', 'Window', 'Help'];

function MenuBar() {
  return (
    <div className="flex h-[44px] items-center bg-[#b0b0b0] pr-[46px] pl-[40px] text-[27.5px] whitespace-nowrap text-black">
      <FaApple className="mr-[37px] h-[34px] w-[30px] shrink-0" />
      <span className="mr-[38px] font-semibold">QGIS 3</span>
      <div className="flex gap-[38px]">
        {menuItems.map((m) => (
          <span key={m}>{m}</span>
        ))}
      </div>
      <FaVolumeUp className="ml-auto h-[26px] w-[32px] shrink-0" />
      <span className="ml-[14px] text-[25px]">84 %</span>
      <Ic w={50} h={24} className="ml-[5px]">
        <rect x="1" y="2" width="44" height="20" rx="4" fill="none" stroke="#111" strokeWidth="2" />
        <rect x="4" y="5" width="32" height="14" fill="#111" />
        <rect x="46" y="8" width="3" height="8" fill="#111" />
        <path d="M26 3l-8 10h6l-3 8 9-11h-6z" fill="#fff" stroke="#111" />
      </Ic>
      <div className="ml-[28px] flex h-[24px] w-[30px] flex-col">
        <span className="flex-1 bg-black" />
        <span className="flex-1 bg-[#d00000]" />
        <span className="flex-1 bg-[#ffce00]" />
      </div>
      <span className="ml-[12px] text-[22px] text-[#555]">German</span>
      <span className="ml-[33px] text-[28px]">11. Dec&nbsp; 08:00</span>
      <span className="ml-[27px] font-medium">Matthias Baitsch</span>
      <div className="ml-[33px]"><Lens size={30} color="#111" /></div>
      <div className="ml-[36px] h-[32px] w-[32px] rounded-full border-[2px] border-[#111] bg-[conic-gradient(#d33fb5,#27c0e8,#2a3dd6,#8a37c8,#d33fb5)]" />
      <div className="ml-[23px] flex flex-col gap-[6px]">
        <span className="h-[4px] w-[37px] bg-[linear-gradient(90deg,black_6px,transparent_6px,transparent_10px,black_10px)]" />
        <span className="h-[4px] w-[37px] bg-[linear-gradient(90deg,black_6px,transparent_6px,transparent_10px,black_10px)]" />
        <span className="h-[4px] w-[37px] bg-[linear-gradient(90deg,black_6px,transparent_6px,transparent_10px,black_10px)]" />
      </div>
    </div>
  );
}

const Lights = ({ active = false }: { active?: boolean }) => (
  <div className="flex gap-[16px]">
    <span className={`h-[24px] w-[24px] rounded-full ${active ? 'bg-[#f9595a]' : 'border border-[#bbb] bg-[#d6d6d6]'}`} />
    <span className="h-[24px] w-[24px] rounded-full border border-[#bbb] bg-[#d6d6d6]" />
    <span className={`h-[24px] w-[24px] rounded-full ${active ? 'bg-[#2bc840]' : 'border border-[#bbb] bg-[#d6d6d6]'}`} />
  </div>
);

type TreeRow = { label: string; depth: 0 | 1 | 2; arrow?: 'r' | 'd'; icon: ReactNode; sel?: boolean };

function IconGeoPkgSmall() {
  return (
    <Ic w={32} h={30}>
      <path d="M16 12L31 5v14l-15 9z" fill="#f4d34e" stroke="#8f7410" />
      <path d="M16 12L1 5v14l15 9z" fill="#d8ac08" stroke="#8f7410" />
      <ellipse cx="16" cy="8" rx="13" ry="7" fill="#7fa3cc" stroke="#446f9e" />
      <path d="M9 6l6-2 4 2-4 3zM20 8l4 0-1 3-3-1z" fill="#34506e" />
    </Ic>
  );
}

const browserRows: TreeRow[] = [
  { label: 'Favorites', depth: 0, icon: <Star /> },
  { label: 'Home', depth: 0, arrow: 'r', icon: <HomeIc /> },
  { label: '/', depth: 0, arrow: 'r', icon: <Folder /> },
  { label: '/Volumes', depth: 0, arrow: 'r', icon: <Folder /> },
  { label: 'GeoPackage', depth: 0, icon: <IconGeoPkgSmall /> },
  { label: 'SpatiaLite', depth: 0, icon: <Feather w={32} h={32} /> },
  { label: 'PostGIS', depth: 0, icon: <Elephant /> },
  { label: 'MSSQL', depth: 0, arrow: 'r', icon: <Sail /> },
  { label: 'DB2', depth: 0, arrow: 'r', icon: <Db2Ic /> },
  { label: 'WMS/WMTS', depth: 0, icon: <GlobeMap /> },
  { label: 'XYZ Tiles', depth: 0, arrow: 'r', icon: <GlobeMap /> },
  { label: 'WCS', depth: 0, icon: <GlobeWcs /> },
  { label: 'WFS', depth: 0, arrow: 'd', icon: <GlobeWfs /> },
  { label: 'wfs_dlm1000', depth: 1, arrow: 'r', icon: <WfsGroup /> },
  { label: 'wfs_vg1000-ew', depth: 1, arrow: 'r', icon: <WfsGroup /> },
  { label: 'wfs_vg250', depth: 1, arrow: 'r', icon: <WfsGroup /> },
  { label: 'wfs_vg2500', depth: 1, arrow: 'd', icon: <WfsGroup sel />, sel: true },
  { label: 'Bundesland', depth: 2, icon: <GlobeWfs /> },
  { label: 'Kreis', depth: 2, icon: <GlobeWfs /> },
  { label: 'Regierungsbezirk', depth: 2, icon: <GlobeWfs /> },
  { label: 'OWS', depth: 0, arrow: 'r', icon: <GlobeOws /> },
  { label: 'ArcGisMapServer', depth: 0, icon: <GlobeMap /> },
];

const depthPad = ['pl-[15px]', 'pl-[55px]', 'pl-[95px]'];

function BrowserTree() {
  return (
    <div className="relative h-[878px] shrink-0 overflow-hidden bg-white pt-[1px]">
      {browserRows.map((r) => (
        <div key={r.label} className={`flex h-[40px] w-[406px] items-center ${depthPad[r.depth]} ${r.sel ? 'bg-[#dbdbdb]' : ''}`}>
          <div className={`flex shrink-0 ${r.depth === 0 ? 'w-[35px]' : 'w-[36px]'}`}><Arrow dir={r.arrow} /></div>
          <div className="flex w-[44px] shrink-0 justify-start">{r.icon}</div>
          <span className="whitespace-nowrap">{r.label}</span>
        </div>
      ))}
      <div className="absolute top-[6px] right-[3px] h-[787px] w-[16px] rounded-full bg-[#6f6f6f]" />
    </div>
  );
}

const DockTitle = ({ title }: { title: string }) => (
  <div className="flex h-[44px] shrink-0 items-center gap-[8px] border-b-[2px] border-[#b5b5b5] bg-[linear-gradient(#ebebeb,#d3d3d3)] pl-[2px] text-[22px] text-[#333]">
    <DockClose />
    <DockFloat />
    <span className="flex-1 pt-[2px] text-center">{title}</span>
  </div>
);

const processingRows = [
  'Cartography', 'Database', 'File tools', 'Graphics', 'Interpolation', 'Layer tools', 'Network analysis', 'Raster analysis', 'Raster terrain analysis', 'Raster tools',
  'Vector analysis', 'Vector creation', 'Vector general', 'Vector geometry', 'Vector overlay', 'Vector selection', 'Vector table',
];

const sideItems: { label: string; icon: ReactNode; gap?: string }[] = [
  { label: 'Source', icon: <IconSource /> },
  { label: 'Symbology', icon: <IconBroom /> },
  { label: 'Labels', icon: <IconLabels /> },
  { label: 'Diagrams', icon: <IconDiagrams /> },
  { label: '3D View', icon: <Icon3D /> },
  { label: 'Source Fields', icon: <IconSourceFields /> },
  { label: 'Attributes Form', icon: <IconAttrForm /> },
  { label: 'Joins', icon: <IconJoins />, gap: 'mt-[7px]' },
  { label: 'Auxiliary Storage', icon: <IconAux />, gap: 'mt-[4px]' },
  { label: 'Actions', icon: <IconActions />, gap: 'mt-[4px]' },
  { label: 'Display', icon: <IconDisplay /> },
  { label: 'Rendering', icon: <IconBroom w={44} h={34} flag={false} /> },
  { label: 'Variables', icon: <Epsilon size={56} /> },
  { label: 'Metadata', icon: <IconMetadata /> },
  { label: 'Dependencies', icon: <IconDeps /> },
  { label: 'Legend', icon: <IconLegend /> },
  { label: 'QGIS Server', icon: <IconServer /> },
  { label: 'Digitizing', icon: <IconDigitize /> },
];

type InfoRow = { k: string; v?: ReactNode };

const Section = ({ title, rows, first = false }: { title: string; rows: InfoRow[]; first?: boolean }) => (
  <section className={first ? '' : 'mt-[55px]'}>
    <h2 className="h-[73px] pt-[12px] pl-[29px] text-[42px] leading-[46px] whitespace-nowrap text-[#589632]">{title}</h2>
    <div className="mx-[9px] h-[2px] bg-[#bdbdbd]" />
    <div className="grid grid-cols-[auto_1fr] gap-x-[34px] pt-[17px] pl-[76px]">
      {rows.map((r) => (
        <div key={r.k} className="contents">
          <div className="py-[2px] text-right whitespace-nowrap">{r.k}</div>
          <div className="py-[2px]">{r.v}</div>
        </div>
      ))}
    </div>
  </section>
);

const PlainBtn = ({ label, className = '' }: { label: string; className?: string }) => (
  <button className={`h-[38px] rounded-[6px] border border-[#c8c8c8] border-b-[#aaa] bg-white text-[25px] leading-none text-[#222] shadow-[0_1px_1px_rgba(0,0,0,0.2)] ${className}`}>
    {label}
  </button>
);

function LayerDialog() {
  return (
    <div className="absolute top-0 bottom-0 left-[585px] flex w-[1651px] flex-col overflow-hidden rounded-t-[12px] rounded-b-[12px] bg-[#ececec] shadow-[0_0_70px_rgba(0,0,0,0.45)]">
      <div className="relative flex h-[44px] shrink-0 items-center bg-[linear-gradient(#ebebeb,#cfcfcf)] pl-[17px]">
        <Lights active />
        <span className="absolute left-[602px] text-[25.5px] whitespace-nowrap text-[#444]">Layer Properties - Kreis | Information</span>
      </div>
      <div className="flex min-h-0 flex-1">
        <div className="w-[301px] shrink-0 bg-[#5a5a5a] text-[#f2f2f2]">
          <div className="h-[62px] pt-0 pr-[2px] pl-[3px]">
            <div className="flex h-[40px] items-center border border-[#555] bg-white pl-[17px]">
              <Lens size={24} />
            </div>
          </div>
          <div className="flex h-[76px] items-center bg-[#ececec] pl-[19px] text-black">
            <IconInformation />
            <span className="ml-[23px]">Information</span>
          </div>
          {sideItems.map((s) => (
            <div key={s.label} className={`flex h-[76px] items-center ${s.gap ?? ''}`}>
              <div className="flex w-[79px] shrink-0 justify-center pl-[8px]">{s.icon}</div>
              <span className="whitespace-nowrap">{s.label}</span>
            </div>
          ))}
        </div>
        <div className="relative w-[14px] shrink-0">
          <span className="absolute top-[851px] left-[4px] h-[7px] w-[12px] rounded-full bg-[#b5b5b5]" />
        </div>
        <div className="flex min-w-0 flex-1 flex-col pr-[8px]">
          <div className="mt-[6px] h-[1612px] shrink-0 overflow-hidden border border-[#bbb] bg-white text-[26.4px] leading-[32px] text-[#111]">
            <Section
              first
              title="Information from provider"
              rows={[
                { k: 'Name', v: 'Kreis' },
                {
                  k: 'Source',
                  v: (
                    <>
                      pagingEnabled='true' restrictToRequestBBOX='1' srsname='EPSG:4326'<br />
                      typename='vg2500:Kreis' url='http://sg.geodatenzentrum.de/wfs_vg2500'<br />
                      version='auto' table="" sql=
                    </>
                  ),
                },
                { k: 'Storage', v: 'Generic vector file' },
                { k: 'Comment' },
                { k: 'Encoding', v: 'UTF-8' },
                { k: 'Geometry', v: 'Polygon (MultiPolygon)' },
                { k: 'CRS', v: 'EPSG:4326 - WGS 84 - Geographic' },
                {
                  k: 'Extent',
                  v: (
                    <span className="tracking-[0.6px]">
                      5.8659988131150094,47.2703623268284403 :<br />
                      15.0377433373167548,55.0573747010353927
                    </span>
                  ),
                },
                { k: 'Unit', v: 'degrees' },
                { k: 'Feature count', v: '401' },
              ]}
            />
            <Section
              title="Identification"
              rows={['Identifier', 'Parent Identifier', 'Title', 'Type', 'Language', 'Abstract', 'Categories', 'Keywords'].map((k) => ({ k }))}
            />
            <Section title="Extent" rows={['CRS', 'Spatial Extent', 'Temporal Extent'].map((k) => ({ k }))} />
            <Section title="Access" rows={['Fees', 'Licenses', 'Rights', 'Constraints'].map((k) => ({ k }))} />
            <Section title="Fields" rows={[]} />
          </div>
          <div className="flex flex-1 items-center pt-[10px]">
            <PlainBtn label="Help" className="ml-[13px] w-[114px]" />
            <div className="ml-[32px] flex h-[40px] w-[133px] overflow-hidden rounded-[6px] border border-[#c8c8c8] bg-white text-[25px] text-[#222]">
              <span className="flex-1 text-center leading-[38px]">Style</span>
              <span className="flex w-[33px] items-center justify-center bg-[linear-gradient(#cb8fc5,#ad35a1)]"><Chevron color="#fff" /></span>
            </div>
            <PlainBtn label="Apply" className="ml-[31px] w-[126px]" />
            <PlainBtn label="Cancel" className="ml-auto w-[134px]" />
            <button className="mr-[11px] ml-[32px] h-[40px] w-[135px] rounded-[6px] bg-[linear-gradient(#cb8fc5,#ad35a1)] text-[25px] leading-none text-white">OK</button>
          </div>
        </div>
      </div>
    </div>
  );
}

export default function App() {
  return (
    <div className="h-[1800px] w-[3912px] overflow-hidden bg-white pl-[518px] font-[Inter,sans-serif] text-[26px] text-black">
      <div className="flex h-full w-[2878px] flex-col">
        <MenuBar />
        <div className="h-[2px] bg-black" />
        <div className="relative flex min-h-0 flex-1 flex-col overflow-hidden rounded-t-[12px] bg-[#e4e4e4]">
          <div className="flex h-[44px] shrink-0 items-center bg-[linear-gradient(#ebebeb,#cfcfcf)] pl-[26px]">
            <Lights />
          </div>

          {/* top toolbars */}
          <div className="flex h-[72px] shrink-0 items-center border-y-[2px] border-t-[#b5b5b5] border-b-[#aaa] bg-[linear-gradient(#eeeeee,#cacaca)] pl-[12px]">
            <Handle className="mr-[24px]" />
            <div className="flex items-center gap-[33px]">
              <IconNew />
              <IconOpen />
              <IconSave />
              <IconSaveAs />
              <IconLayout />
              <IconWrenchPage />
              <IconStyleMgr />
            </div>
            <div className="ml-auto flex w-[638px] items-center">
              <div className="flex h-[68px] w-[68px] shrink-0 items-center justify-center rounded-t-[6px] bg-[#c4c4c4]"><IconGear /></div>
              <div className="ml-[26px]"><IconSigma /></div>
              <div className="ml-[46px]"><IconMeasure /></div>
              <div className="ml-[22px]"><IconBalloon /></div>
              <div className="ml-[40px]"><IconTextAnn /></div>
            </div>
          </div>
          <div className="flex h-[72px] shrink-0 items-center border-b-[2px] border-[#aaa] bg-[linear-gradient(#eeeeee,#cacaca)] pl-[12px]">
            <Handle className="mr-[14px]" />
            <div className="flex items-center gap-[27px]">
              <IconAddLayer />
              <IconGeoPkg />
              <IconVirtual />
              <IconSpatialite />
              <div className="ml-[6px]"><IconMemory /></div>
            </div>
            <Handle className="ml-[28px]" />
            <div className="ml-[20px]"><IconPencils /></div>
            <div className="ml-[22px]"><IconPencil /></div>
            <Handle className="mr-[605px] ml-auto" />
          </div>

          <div className="flex min-h-0 flex-1">
            {/* left docks */}
            <div className="flex w-[585px] shrink-0 flex-col">
              <DockTitle title="Browser" />
              <div className="flex h-[56px] shrink-0 items-center gap-[32px] border-b-[2px] border-[#aaa] bg-[linear-gradient(#eeeeee,#cacaca)] pl-[12px]">
                <IconNewDoc />
                <IconRefresh />
                <Funnel />
                <IconTreeArrow />
                <IconInfoSmall />
              </div>
              <BrowserTree />
              <DockTitle title="Layers" />
              <div className="flex h-[56px] shrink-0 items-center border-b-[2px] border-[#aaa] bg-[linear-gradient(#eeeeee,#cacaca)] pl-[12px]">
                <IconBroom w={30} h={24} />
                <div className="ml-[30px]"><IconClipPlus /></div>
                <div className="ml-[31px]"><IconEye /></div>
                <div className="ml-[24px]"><Funnel /></div>
                <div className="ml-[40px]"><IconExprFilter /></div>
                <div className="ml-[18px]"><IconTreeArrow up={false} /></div>
                <div className="ml-[30px]"><IconTreeArrow /></div>
                <div className="ml-[24px]"><IconRemove /></div>
              </div>
              <div className="min-h-0 flex-1 border-y-[2px] border-[#bbb] bg-white">
                <div className="flex h-[45px] items-center bg-[#dbdbdb] pl-[54px]">
                  <Check />
                  <div className="ml-[26px] h-[32px] w-[32px] border-[2px] border-[#b88aa0] bg-[#efacc0]" />
                  <span className="ml-[13px] font-bold underline">Kreis</span>
                </div>
                <div className="flex h-[45px] items-center pl-[54px]">
                  <Check />
                  <div className="ml-[26px] h-[32px] w-[32px] border-[2px] border-[#4f7a56] bg-[#6f9f75]" />
                  <span className="ml-[13px] font-bold">Bundesland</span>
                </div>
              </div>
            </div>

            {/* map canvas, behind the dialog */}
            <div className="min-w-0 flex-1 border-r-[2px] border-[#aaa] bg-white" />

            {/* processing toolbox */}
            <div className="flex w-[505px] shrink-0 flex-col border-l-[4px] border-[#ddd]">
              <DockTitle title="Processing Toolbox" />
              <div className="flex h-[56px] shrink-0 items-center border-b-[2px] border-[#aaa] bg-[linear-gradient(#eeeeee,#cacaca)] pl-[10px]">
                <IconModels />
                <div className="ml-[22px]"><IconPython /></div>
                <div className="ml-[20px]"><IconClock /></div>
                <div className="ml-[32px]"><IconLog /></div>
                <div className="mr-[25px] ml-[27px] h-[46px] border-l-[2px] border-dotted border-[#888]" />
                <IconEdit />
                <div className="mx-[20px] h-[46px] border-l-[2px] border-dotted border-[#888]" />
                <IconWrench />
              </div>
              <div className="flex h-[42px] shrink-0 items-center gap-[12px] border-b-[2px] border-[#bbb] bg-white pt-[2px] pl-[15px] text-[#888]">
                <Lens />
                <span>Search...</span>
              </div>
              <div className="min-h-0 flex-1 bg-white pt-[1px]">
                {processingRows.map((p) => (
                  <div key={p} className="flex h-[40px] items-center pl-[14px]">
                    <div className="w-[37px] shrink-0"><Arrow dir="r" /></div>
                    <div className="w-[42px] shrink-0"><QIc /></div>
                    <span>{p}</span>
                  </div>
                ))}
                {[
                  { p: 'GDAL', i: <GdalIc /> },
                  { p: 'GRASS', i: <GrassIc /> },
                  { p: 'SAGA', i: <SagaIc /> },
                ].map(({ p, i }) => (
                  <div key={p} className="flex h-[40px] items-center pl-[14px]">
                    <div className="w-[35px] shrink-0"><Arrow dir="r" /></div>
                    <div className="w-[44px] shrink-0">{i}</div>
                    <span>{p}</span>
                  </div>
                ))}
              </div>
            </div>
          </div>

          {/* status bar */}
          <div className="flex h-[88px] shrink-0 items-center border-t-[2px] border-[#999] bg-[linear-gradient(#e8e8e8,#aeaeae)] pr-[3px] pl-[7px] text-[22px] whitespace-nowrap">
            <div className="flex h-[39px] w-[436px] shrink-0 items-center gap-[14px] border-[2px] border-[#aaa] bg-white pl-[16px] text-[#888]">
              <Lens size={26} color="#888" />
              <span className="text-[26px]">Type to locate (⌘K)</span>
            </div>
            <span className="ml-[18px]">Ready</span>
            <span className="ml-auto text-[#111]">Rotation</span>
            <div className="ml-[23px] flex h-[32px] w-[144px] shrink-0 items-center border border-[#aaa] bg-white pl-[2px]">0,0 °</div>
            <div className="ml-[6px] flex h-[40px] w-[23px] shrink-0 flex-col items-center justify-center rounded-[10px] bg-white">
              <Ic w={12} h={8}><path d="M1 7l5-5 5 5" fill="none" stroke="#333" strokeWidth="2" /></Ic>
              <Ic w={12} h={8} className="mt-[5px]"><path d="M1 1l5 5 5-5" fill="none" stroke="#333" strokeWidth="2" /></Ic>
            </div>
            <div className="ml-[15px]"><Check /></div>
            <span className="ml-[8px]">Render</span>
            <div className="ml-[6px] flex h-[60px] w-[191px] shrink-0 items-center gap-[8px] border-[3px] border-[#aaa] bg-[#f0f0f0] pl-[8px]">
              <Ic w={32} h={32}>
                <circle cx="16" cy="16" r="14" fill="#ddd" stroke="#666" strokeWidth="2" />
                <ellipse cx="16" cy="16" rx="6" ry="14" fill="none" stroke="#666" strokeWidth="2" />
                <path d="M2 16h28M4 9h24M4 23h24" stroke="#666" strokeWidth="2" />
              </Ic>
              <span>EPSG:4326</span>
            </div>
            <div className="ml-[14px] flex h-[60px] w-[52px] shrink-0 items-center justify-center border-[3px] border-[#aaa] bg-[#f0f0f0]">
              <Ic w={34} h={36}>
                <path d="M17 1c9 0 16 7 16 15 0 5-2 9-4 11l3 7-8-4c-2 1-4 1-7 1C8 31 1 24 1 16S8 1 17 1z" fill="#666" />
                <circle cx="10" cy="16" r="2.500" fill="#f0f0f0" />
                <circle cx="17" cy="16" r="2.500" fill="#f0f0f0" />
                <circle cx="24" cy="16" r="2.500" fill="#f0f0f0" />
              </Ic>
            </div>
          </div>

          <LayerDialog />
        </div>
      </div>
    </div>
  );
}
